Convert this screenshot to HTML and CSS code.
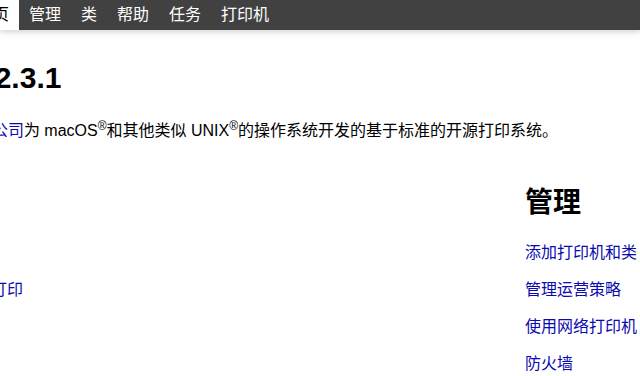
FILE: index.html
```html
<!DOCTYPE html>
<html>
<head>
    <title>首页 - CUPS 2.3.1</title>
    <meta charset="utf-8">
    <link rel="stylesheet" href="styles.css">
</head>
<body>
    <header class="topbar">
        <nav class="menu">
            <a class="active" href="#">首页</a>
            <a href="#">管理</a>
            <a href="#">类</a>
            <a href="#">帮助</a>
            <a href="#">任务</a>
            <a href="#">打印机</a>
        </nav>
    </header>
    <main class="page">
        <h1>CUPS 2.3.1</h1>
        <p class="intro">CUPS 是<a href="#">苹果公司</a>为 macOS<sup>®</sup>和其他类似 UNIX<sup>®</sup>的操作系统开发的基于标准的开源打印系统。</p>
        <div class="row">
            <section class="col">
                <h2>用户</h2>
                <p><a href="#">概述</a></p>
                <p><a href="#">从命令行进行打印</a></p>
                <p><a href="#">论坛</a></p>
            </section>
            <section class="col">
                <h2>管理</h2>
                <p><a href="#">添加打印机和类</a></p>
                <p><a href="#">管理运营策略</a></p>
                <p><a href="#">使用网络打印机</a></p>
                <p><a href="#">防火墙</a></p>
            </section>
        </div>
    </main>
</body>
</html>
```
FILE: styles.css
```css
body {
    margin: 0;
    font-family: "Liberation Sans", "Noto Sans CJK SC", sans-serif;
    font-size: 16px;
    color: #000;
    background: #fff;
    overflow: hidden;
}

a {
    color: #0a0ab0;
    text-decoration: none;
}

.topbar {
    height: 30px;
    background: #414141;
    box-shadow: 0 2px 6px rgba(0, 0, 0, 0.18);
    position: relative;
}

.menu {
    display: flex;
    margin-left: -33px;
    height: 30px;
}

.menu a {
    color: #fff;
    padding: 0 10px;
    line-height: 30px;
    font-size: 16px;
}

.menu a.active {
    background: #fff;
    color: #000;
}

.page {
    margin-left: -105px;
    width: 1000px;
    padding-top: 28px;
}

h1 {
    margin: 0 0 21px 8px;
    font-size: 30px;
    line-height: 40px;
    font-weight: bold;
}

.intro {
    margin: 0;
    line-height: 24px;
}

.intro sup {
    font-size: 12px;
    line-height: 0;
    vertical-align: 6px;
}

.row {
    display: grid;
    grid-template-columns: 630px 1fr;
    margin-top: 40px;
}

.col h2 {
    margin: 0 0 18px;
    font-size: 28px;
    line-height: 40px;
}

.col p {
    margin: 0 0 13px;
    line-height: 24px;
}
```
